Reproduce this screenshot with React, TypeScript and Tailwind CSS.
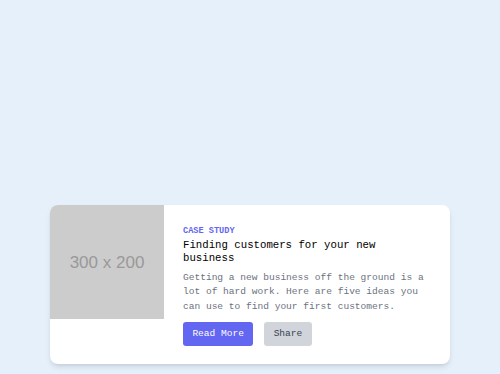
export default function App() {
  return (
    <div className="min-h-screen w-full bg-[#e6f0fb] px-[50px] pt-[205px] pb-[10px]">
      <div className="flex w-[400px] overflow-hidden rounded-lg bg-white shadow-md">
        <div className="flex h-[114px] w-[114px] shrink-0 items-center justify-center bg-[#cccccc]">
          <span className="mt-[2px] font-['Liberation_Sans',Arial,sans-serif] text-[17px] text-[#999999]">300 x 200</span>
        </div>
        <div className="flex flex-1 flex-col px-[19px] pt-[19.5px] pb-[18px] font-['Liberation_Mono',monospace]">
          <p className="text-[8.6px] leading-[1.5] font-bold text-[#6366f1] uppercase">Case Study</p>
          <h2 className="mt-[1.5px] text-[10.7px] leading-[1.25] text-black">
            Finding customers for your new business
          </h2>
          <p className="mt-[5.5px] text-[9.55px] leading-[1.5] text-[#6b7280]">
            Getting a new business off the ground is a lot of hard work. Here are five ideas you can use to find your
            first customers.
          </p>
          <div className="mt-[8px] flex gap-[11px]">
            <button className="rounded-[3px] bg-[#6366f1] px-[9.4px] py-[4.8px] text-[9.55px] leading-[1.5] text-white">
              Read More
            </button>
            <button className="rounded-[3px] bg-[#d1d5db] px-[9.3px] py-[4.8px] text-[9.55px] leading-[1.5] text-[#374151]">
              Share
            </button>
          </div>
        </div>
      </div>
    </div>
  );
}
